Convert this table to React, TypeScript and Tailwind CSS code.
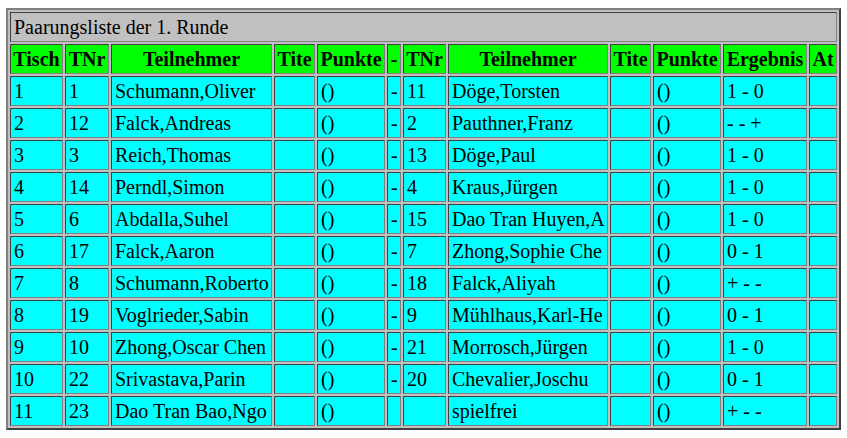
import React from "react";

const widths = [53, 44, 161, 41, 68, 14, 43, 160, 41, 68, 84, 28];
const headers = ["Tisch", "TNr", "Teilnehmer", "Tite", "Punkte", "-", "TNr", "Teilnehmer", "Tite", "Punkte", "Ergebnis", "At"];

const rows = [
  ["1", "1", "Schumann,Oliver", "", "()", "-", "11", "Döge,Torsten", "", "()", "1 - 0", ""],
  ["2", "12", "Falck,Andreas", "", "()", "-", "2", "Pauthner,Franz", "", "()", "- - +", ""],
  ["3", "3", "Reich,Thomas", "", "()", "-", "13", "Döge,Paul", "", "()", "1 - 0", ""],
  ["4", "14", "Perndl,Simon", "", "()", "-", "4", "Kraus,Jürgen", "", "()", "1 - 0", ""],
  ["5", "6", "Abdalla,Suhel", "", "()", "-", "15", "Dao Tran Huyen,A", "", "()", "1 - 0", ""],
  ["6", "17", "Falck,Aaron", "", "()", "-", "7", "Zhong,Sophie Che", "", "()", "0 - 1", ""],
  ["7", "8", "Schumann,Roberto", "", "()", "-", "18", "Falck,Aliyah", "", "()", "+ - -", ""],
  ["8", "19", "Voglrieder,Sabin", "", "()", "-", "9", "Mühlhaus,Karl-He", "", "()", "0 - 1", ""],
  ["9", "10", "Zhong,Oscar Chen", "", "()", "-", "21", "Morrosch,Jürgen", "", "()", "1 - 0", ""],
  ["10", "22", "Srivastava,Parin", "", "()", "-", "20", "Chevalier,Joschu", "", "()", "0 - 1", ""],
  ["11", "23", "Dao Tran Bao,Ngo", "", "()", "", "", "spielfrei", "", "()", "+ - -", ""],
];

const cell =
  "border border-solid border-t-[#404040] border-l-[#404040] border-r-[#808080] border-b-[#808080] px-[1px] py-[2px] leading-[24px] whitespace-nowrap overflow-hidden";

export default function App() {
  return (
    <div className="bg-white min-h-screen pt-[8px] pl-[6px] font-['Liberation_Serif',serif] text-[20px] leading-[24px] text-black">
      <table className="table-fixed w-[835px] border-separate border-spacing-[2px] border-2 border-solid border-t-[#808080] border-l-[#808080] border-r-[#404040] border-b-[#404040] bg-[#c0c0c0]">
        <colgroup>
          {widths.map((w, i) => (
            <col key={i} style={{ width: w }} />
          ))}
        </colgroup>
        <tbody>
          <tr>
            <td colSpan={12} className={`${cell} bg-[#c0c0c0] text-left pl-[3px]`}>
              Paarungsliste der 1. Runde
            </td>
          </tr>
          <tr>
            {headers.map((h, i) => (
              <th key={i} className={`${cell} bg-[#00ff00] font-bold text-center`}>
                {h}
              </th>
            ))}
          </tr>
          {rows.map((r, ri) => (
            <tr key={ri}>
              {r.map((c, ci) => (
                <td key={ci} className={`${cell} bg-[#00ffff] text-left pl-[3px]`}>
                  {c}
                </td>
              ))}
            </tr>
          ))}
        </tbody>
      </table>
    </div>
  );
}
